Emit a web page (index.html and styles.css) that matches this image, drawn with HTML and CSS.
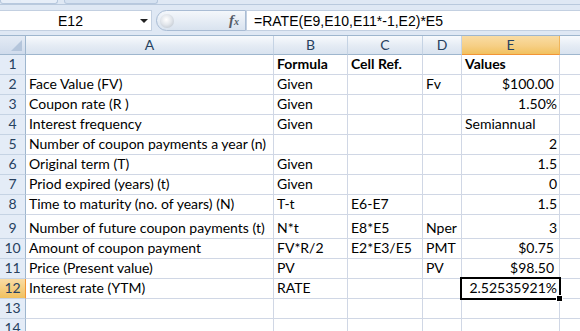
FILE: index.html
```html
<!DOCTYPE html>
<html lang="en">
<head>
    <meta charset="UTF-8">
    <title>Bond YTM</title>
    <link rel="stylesheet" href="styles.css">
</head>
<body>
    <div class="app">
        <div class="tabs">
            <span class="tab tab-one"></span>
            <span class="tab tab-two"></span>
        </div>

        <div class="fbar">
            <div class="namebox">
                <span class="name">E12</span>
                <span class="caret"></span>
            </div>
            <div class="fxpill">
                <span class="dot"></span>
                <span class="fx"><i>f</i><small>x</small></span>
            </div>
            <div class="formula">=RATE(E9,E10,E11*-1,E2)*E5</div>
        </div>

        <div class="sheet">
            <div class="row head">
                <div class="corner"><span class="tri"></span></div>
                <div class="colhead">A</div>
                <div class="colhead">B</div>
                <div class="colhead">C</div>
                <div class="colhead">D</div>
                <div class="colhead active">E</div>
                <div class="colhead last"></div>
            </div>

            <div class="row">
                <div class="rowhead">1</div>
                <div class="cell"></div>
                <div class="cell bold">Formula</div>
                <div class="cell bold">Cell Ref.</div>
                <div class="cell"></div>
                <div class="cell bold">Values</div>
                <div class="cell last"></div>
            </div>
            <div class="row">
                <div class="rowhead">2</div>
                <div class="cell">Face Value (FV)</div>
                <div class="cell">Given</div>
                <div class="cell"></div>
                <div class="cell">Fv</div>
                <div class="cell num money">$100.00</div>
                <div class="cell last"></div>
            </div>
            <div class="row">
                <div class="rowhead">3</div>
                <div class="cell">Coupon rate (R )</div>
                <div class="cell">Given</div>
                <div class="cell"></div>
                <div class="cell"></div>
                <div class="cell num">1.50%</div>
                <div class="cell last"></div>
            </div>
            <div class="row">
                <div class="rowhead">4</div>
                <div class="cell">Interest frequency</div>
                <div class="cell">Given</div>
                <div class="cell"></div>
                <div class="cell"></div>
                <div class="cell">Semiannual</div>
                <div class="cell last"></div>
            </div>
            <div class="row">
                <div class="rowhead">5</div>
                <div class="cell">Number of coupon payments a year (n)</div>
                <div class="cell"></div>
                <div class="cell"></div>
                <div class="cell"></div>
                <div class="cell num">2</div>
                <div class="cell last"></div>
            </div>
            <div class="row">
                <div class="rowhead">6</div>
                <div class="cell">Original term (T)</div>
                <div class="cell">Given</div>
                <div class="cell"></div>
                <div class="cell"></div>
                <div class="cell num">1.5</div>
                <div class="cell last"></div>
            </div>
            <div class="row">
                <div class="rowhead">7</div>
                <div class="cell">Priod expired (years) (t)</div>
                <div class="cell">Given</div>
                <div class="cell"></div>
                <div class="cell"></div>
                <div class="cell num">0</div>
                <div class="cell last"></div>
            </div>
            <div class="row">
                <div class="rowhead">8</div>
                <div class="cell">Time to maturity (no. of years) (N)</div>
                <div class="cell">T-t</div>
                <div class="cell">E6-E7</div>
                <div class="cell"></div>
                <div class="cell num">1.5</div>
                <div class="cell last"></div>
            </div>
            <div class="row tall">
                <div class="rowhead">9</div>
                <div class="cell">Number of future coupon payments (t)</div>
                <div class="cell">N*t</div>
                <div class="cell">E8*E5</div>
                <div class="cell">Nper</div>
                <div class="cell num">3</div>
                <div class="cell last"></div>
            </div>
            <div class="row">
                <div class="rowhead">10</div>
                <div class="cell">Amount of coupon payment</div>
                <div class="cell">FV*R/2</div>
                <div class="cell">E2*E3/E5</div>
                <div class="cell">PMT</div>
                <div class="cell num money">$0.75</div>
                <div class="cell last"></div>
            </div>
            <div class="row">
                <div class="rowhead">11</div>
                <div class="cell">Price (Present value)</div>
                <div class="cell">PV</div>
                <div class="cell"></div>
                <div class="cell">PV</div>
                <div class="cell num money">$98.50</div>
                <div class="cell last"></div>
            </div>
            <div class="row">
                <div class="rowhead active">12</div>
                <div class="cell">Interest rate (YTM)</div>
                <div class="cell">RATE</div>
                <div class="cell"></div>
                <div class="cell"></div>
                <div class="cell num selected">2.52535921%</div>
                <div class="cell last"></div>
            </div>
            <div class="row">
                <div class="rowhead">13</div>
                <div class="cell"></div>
                <div class="cell"></div>
                <div class="cell"></div>
                <div class="cell"></div>
                <div class="cell"></div>
                <div class="cell last"></div>
            </div>
            <div class="row">
                <div class="rowhead">14</div>
                <div class="cell"></div>
                <div class="cell"></div>
                <div class="cell"></div>
                <div class="cell"></div>
                <div class="cell"></div>
                <div class="cell last"></div>
            </div>
        </div>
    </div>
</body>
</html>
```

FILE: styles.css
```css
body {
    margin: 0;
    padding: 0;
    background-color: #fff;
    font-family: Lato, "Liberation Sans", sans-serif;
    font-size: 14px;
    color: #000;
    overflow: hidden;
}

.app {
    width: 580px;
    height: 331px;
    overflow: hidden;
    background-color: #dfe8f4;
}

/* ribbon remnant at the very top */
.tabs {
    height: 4px;
    display: flex;
    gap: 4px;
    padding: 0 0 0 0;
    border-bottom: 1px solid #b9c9dd;
}

.tab {
    height: 3px;
    background-color: #e7eef8;
    border: 1px solid #b7c8de;
    border-top: none;
    border-radius: 0 0 3px 3px;
}

.tab-one {
    width: 56px;
}

.tab-two {
    width: 92px;
    margin-left: 2px;
    background-color: #d6e2f1;
}

.tab-two + .tab {
    display: none;
}

/* formula bar */
.fbar {
    display: flex;
    height: 21px;
    margin-top: 5px;
    margin-bottom: 4px;
}

.namebox {
    width: 152px;
    box-sizing: border-box;
    background-color: #fff;
    border: 1px solid #c3d0e1;
    border-left: none;
    display: flex;
    align-items: center;
    justify-content: center;
    position: relative;
}

.name {
    font-family: "Liberation Sans", Arial, sans-serif;
    font-size: 14px;
    margin-left: -10px;
}

.caret {
    position: absolute;
    right: 3px;
    top: 8px;
    width: 0;
    height: 0;
    border-left: 4px solid transparent;
    border-right: 4px solid transparent;
    border-top: 4px solid #222;
}

.fxpill {
    width: 90px;
    box-sizing: border-box;
    margin-left: 4px;
    border: 1px solid #a9bcd4;
    border-radius: 11px 0 0 11px;
    background: linear-gradient(#f4f7fb, #d9e3ef);
    display: flex;
    align-items: center;
    justify-content: space-between;
    padding: 0 6px 0 3px;
}

.dot {
    width: 14px;
    height: 14px;
    border-radius: 50%;
    background: radial-gradient(circle at 45% 40%, #ffffff 0%, #e3e7ec 45%, #b4bcc6 100%);
}

.fx {
    font-family: "Liberation Serif", serif;
    color: #555c66;
    font-size: 15px;
    font-weight: bold;
    line-height: 1;
}

.fx i {
    font-style: italic;
}

.fx small {
    font-size: 10px;
    font-style: italic;
}

.formula {
    flex: 1;
    background-color: #fff;
    border: 1px solid #c3d0e1;
    border-right: none;
    padding-left: 7px;
    display: flex;
    align-items: center;
    font-family: "Liberation Sans", Arial, sans-serif;
    font-size: 14px;
}

/* grid */
.sheet {
    background-color: #fff;
}

.row {
    display: grid;
    grid-template-columns: 26px 248px 74px 75px 39px 98px 1fr;
    height: 20px;
}

.row.tall {
    height: 24px;
}

.row.head {
    height: 19px;
    border-top: 1px solid #9eb6ce;
    background-color: #dfe8f4;
}

.corner {
    box-sizing: border-box;
    border-right: 1px solid #9eb6ce;
    border-bottom: 1px solid #9eb6ce;
    background: linear-gradient(#e4ebf5, #cfdbec);
    position: relative;
}

.tri {
    position: absolute;
    right: 3px;
    bottom: 3px;
    width: 0;
    height: 0;
    border-left: 11px solid transparent;
    border-bottom: 11px solid #b4c5db;
}

.colhead {
    box-sizing: border-box;
    border-right: 1px solid #c5d3e4;
    border-bottom: 1px solid #9eb6ce;
    background: linear-gradient(#f8fafd, #e4ebf4 55%, #d9e3ef);
    color: #27415f;
    text-align: center;
    line-height: 18px;
}

.colhead.active {
    background: linear-gradient(#f9dca4, #f6cf85 55%, #f1c15f);
    border-bottom: 1px solid #f29436;
    border-right-color: #f0b55b;
}

.colhead.last {
    border-right: none;
}

.rowhead {
    box-sizing: border-box;
    border-right: 1px solid #9eb6ce;
    border-bottom: 1px solid #c5d3e4;
    background-color: #e4ecf7;
    color: #27415f;
    display: flex;
    align-items: flex-end;
    justify-content: center;
    padding-bottom: 1px;
    line-height: 18px;
}

.rowhead.active {
    background: linear-gradient(#f9dca4, #f1c15f);
    border-right: 1px solid #f29436;
}

.cell {
    box-sizing: border-box;
    border-right: 1px solid #d0d7e5;
    border-bottom: 1px solid #d0d7e5;
    padding: 0 2px 1px 3px;
    display: flex;
    align-items: flex-end;
    white-space: nowrap;
    line-height: 18px;
}

.cell.last {
    border-right: none;
}

.bold {
    font-weight: bold;
}

.num {
    justify-content: flex-end;
}

.money {
    padding-right: 5px;
}

.selected {
    position: relative;
}

.selected::after {
    content: "";
    position: absolute;
    left: -2px;
    top: -2px;
    right: -2px;
    bottom: -2px;
    border: 2px solid #000;
}

.selected::before {
    content: "";
    position: absolute;
    right: -4px;
    bottom: -4px;
    width: 5px;
    height: 5px;
    background-color: #000;
    border: 1px solid #fff;
    z-index: 1;
}
```
